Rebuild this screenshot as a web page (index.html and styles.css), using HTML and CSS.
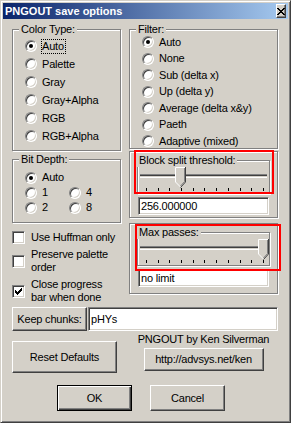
FILE: index.html
```html
<!DOCTYPE html>
<html>
<head>
    <meta charset="utf-8">
    <title>PNGOUT save options</title>
    <link rel="stylesheet" href="styles.css">
</head>
<body>
<div class="window">
    <div class="titlebar">
        <span class="title">PNGOUT save options</span>
        <span class="close-btn">
            <svg width="8" height="7" viewBox="0 0 8 7" shape-rendering="crispEdges"><path d="M0 0h2v1H0zM6 0h2v1H6zM1 1h2v1H1zM5 1h2v1H5zM2 2h4v1H2zM3 3h2v1H3zM2 4h4v1H2zM1 5h2v1H1zM5 5h2v1H5zM0 6h2v1H0zM6 6h2v1H6z" fill="#000"/></svg>
        </span>
    </div>
    <div class="client">
        <div class="columns">
            <div class="col-left">
                <div class="group color-group">
                    <span class="group-label">Color Type:</span>
                    <div class="radio-list">
                        <div class="radio"><span class="radio-box on"></span><span class="radio-text focus">Auto</span></div>
                        <div class="radio"><span class="radio-box"></span><span class="radio-text">Palette</span></div>
                        <div class="radio"><span class="radio-box"></span><span class="radio-text">Gray</span></div>
                        <div class="radio"><span class="radio-box"></span><span class="radio-text">Gray+Alpha</span></div>
                        <div class="radio"><span class="radio-box"></span><span class="radio-text">RGB</span></div>
                        <div class="radio"><span class="radio-box"></span><span class="radio-text">RGB+Alpha</span></div>
                    </div>
                </div>
                <div class="group depth-group">
                    <span class="group-label">Bit Depth:</span>
                    <div class="depth-grid">
                        <div class="radio wide"><span class="radio-box on"></span><span class="radio-text">Auto</span></div>
                        <div class="radio"><span class="radio-box"></span><span class="radio-text">1</span></div>
                        <div class="radio"><span class="radio-box"></span><span class="radio-text">4</span></div>
                        <div class="radio"><span class="radio-box"></span><span class="radio-text">2</span></div>
                        <div class="radio"><span class="radio-box"></span><span class="radio-text">8</span></div>
                    </div>
                </div>
                <div class="checks">
                    <div class="check"><span class="check-box"></span><span>Use Huffman only</span></div>
                    <div class="check"><span class="check-box"></span><span>Preserve palette<br>order</span></div>
                    <div class="check"><span class="check-box">
                        <svg width="7" height="7" viewBox="0 0 7 7" shape-rendering="crispEdges"><path d="M0 2h1v3H0zM1 3h1v3H1zM2 4h1v3H2zM3 3h1v3H3zM4 2h1v3H4zM5 1h1v3H5zM6 0h1v3H6z" fill="#000"/></svg>
                    </span><span>Close progress<br>bar when done</span></div>
                </div>
            </div>
            <div class="col-right">
                <div class="group filter-group">
                    <span class="group-label">Filter:</span>
                    <div class="radio-list">
                        <div class="radio"><span class="radio-box on"></span><span class="radio-text">Auto</span></div>
                        <div class="radio"><span class="radio-box"></span><span class="radio-text">None</span></div>
                        <div class="radio"><span class="radio-box"></span><span class="radio-text">Sub (delta x)</span></div>
                        <div class="radio"><span class="radio-box"></span><span class="radio-text">Up (delta y)</span></div>
                        <div class="radio"><span class="radio-box"></span><span class="radio-text">Average (delta x&amp;y)</span></div>
                        <div class="radio"><span class="radio-box"></span><span class="radio-text">Paeth</span></div>
                        <div class="radio"><span class="radio-box"></span><span class="radio-text">Adaptive (mixed)</span></div>
                    </div>
                </div>
                <div class="group slider-group block-group">
                    <div class="group inner-group">
                        <span class="group-label inner-label">Block split threshold:</span>
                        <div class="track"></div>
                        <div class="ticks"><i></i><i></i><i></i><i></i><i></i><i></i><i></i><i></i><i></i><i></i><i></i></div>
                        <svg class="thumb thumb-block" width="11" height="21" viewBox="0 0 11 21">
                            <polygon points="0,0 11,0 11,15 5.5,20.5 0,15" fill="#d4d0c8"/>
                            <path d="M0.5 15V0.5H10M0.5 15L5.5 20" stroke="#fff" fill="none"/>
                            <path d="M10.5 0V15L5.5 20.5" stroke="#404040" fill="none"/>
                            <path d="M9.5 1V14.6L5.5 19" stroke="#808080" fill="none"/>
                        </svg>
                    </div>
                    <div class="edit edit-value">256.000000</div>
                    <div class="marker marker-block"></div>
                </div>
                <div class="group slider-group max-group">
                    <div class="group inner-group">
                        <span class="group-label inner-label">Max passes:</span>
                        <div class="track"></div>
                        <div class="ticks"><i></i><i></i><i></i><i></i><i></i><i></i><i></i><i></i><i></i><i></i><i></i></div>
                        <svg class="thumb thumb-max" width="11" height="21" viewBox="0 0 11 21">
                            <polygon points="0,0 11,0 11,15 5.5,20.5 0,15" fill="#d4d0c8"/>
                            <path d="M0.5 15V0.5H10M0.5 15L5.5 20" stroke="#fff" fill="none"/>
                            <path d="M10.5 0V15L5.5 20.5" stroke="#404040" fill="none"/>
                            <path d="M9.5 1V14.6L5.5 19" stroke="#808080" fill="none"/>
                        </svg>
                    </div>
                    <div class="edit edit-value">no limit</div>
                    <div class="marker marker-max"></div>
                </div>
            </div>
        </div>
        <div class="chunks-row">
            <div class="btn btn-keep">Keep chunks:</div>
            <div class="edit edit-chunks">pHYs</div>
        </div>
        <div class="about-row">
            <div class="btn btn-reset">Reset Defaults</div>
            <div class="about">
                <span>PNGOUT by Ken Silverman</span>
                <div class="btn btn-link">http://advsys.net/ken</div>
            </div>
        </div>
        <div class="actions">
            <div class="btn btn-default">OK</div>
            <div class="btn">Cancel</div>
        </div>
    </div>
</div>
</body>
</html>
```

FILE: styles.css
```css
* {
    margin: 0;
    padding: 0;
    box-sizing: border-box;
}

body {
    background: #fff;
    font: 11px/13px "Liberation Sans", Arial, sans-serif;
    letter-spacing: -0.2px;
    color: #000;
}

.window {
    width: 291px;
    height: 423px;
    background: #d4d0c8;
    border: 1px solid;
    border-color: #d4d0c8 #404040 #404040 #d4d0c8;
    box-shadow: inset 1px 1px #fff, inset -1px -1px #808080;
    padding: 2px;
}

/* title bar */
.titlebar {
    height: 16px;
    display: flex;
    align-items: center;
    justify-content: space-between;
    padding: 0 2px;
    background: linear-gradient(to right, #0a246a, #a6caf0);
}

.title {
    color: #fff;
    font-weight: bold;
    letter-spacing: 0;
}

.close-btn {
    width: 10px;
    height: 14px;
    display: flex;
    align-items: center;
    justify-content: center;
    background: #d4d0c8;
    border: 1px solid;
    border-color: #fff #404040 #404040 #fff;
    box-shadow: inset -1px -1px #808080;
}

.close-btn svg {
    display: block;
}

/* layout */
.client {
    padding: 10px 10px 0 9px;
}

.columns {
    display: grid;
    grid-template-columns: 109px 149px;
    column-gap: 8px;
    align-items: start;
}

/* etched group box */
.group {
    position: relative;
    border: 1px solid #808080;
    box-shadow: inset 1px 1px #fff, 1px 1px #fff;
}

.group-label {
    position: absolute;
    top: -7px;
    left: 6px;
    padding: 0 2px;
    background: #d4d0c8;
    white-space: nowrap;
}

.color-group {
    height: 122px;
}

.color-group .radio-list {
    padding: 7px 0 0 12px;
}

.radio {
    display: flex;
    align-items: center;
    height: 18px;
    white-space: nowrap;
}

.radio-box {
    position: relative;
    flex: none;
    width: 12px;
    height: 12px;
    margin-right: 4px;
    border-radius: 50%;
    background: #fff;
    border: 1px solid;
    border-color: #808080 #fff #fff #808080;
    box-shadow: inset 1px 1px #404040, inset -1px -1px #d4d0c8;
}

.radio-box.on::after {
    content: "";
    position: absolute;
    left: 3px;
    top: 3px;
    width: 4px;
    height: 4px;
    border-radius: 50%;
    background: #000;
}

.radio-text {
    border: 1px dotted transparent;
    padding-right: 1px;
}

.radio-text.focus {
    border-color: #000;
}

.depth-group {
    margin-top: 8px;
    height: 64px;
}

.depth-grid {
    display: grid;
    grid-template-columns: 44px auto;
    padding: 10px 0 0 12px;
}

.depth-grid .radio {
    height: 15px;
}

.depth-grid .wide {
    grid-column: 1 / 3;
}

.checks {
    margin-top: 8px;
    display: flex;
    flex-direction: column;
    gap: 4px;
}

.check {
    display: flex;
    align-items: center;
}

.check-box {
    flex: none;
    width: 13px;
    height: 13px;
    margin-right: 6px;
    padding: 2px;
    background: #fff;
    border: 1px solid;
    border-color: #808080 #fff #fff #808080;
    box-shadow: inset 1px 1px #404040, inset -1px -1px #d4d0c8;
}

.check-box svg {
    display: block;
}

/* right column */
.filter-group {
    height: 120px;
}

.filter-group .radio-list {
    padding: 4px 0 0 12px;
}

.filter-group .radio {
    height: 16.5px;
}

.slider-group {
    margin-top: 2px;
    height: 67px;
}

.inner-group {
    margin: 8px 7px 0 7px;
    height: 34px;
}

.inner-label {
    left: -1px;
}

.track {
    margin: 13px 0 0 2px;
    width: 127px;
    height: 4px;
    border-top: 1px solid #808080;
    border-bottom: 1px solid #fff;
    box-shadow: inset 0 1px #404040;
    background: #d4d0c8;
}

.ticks {
    display: flex;
    justify-content: space-between;
    width: 118px;
    margin: 10px 0 0 8px;
}

.ticks i {
    width: 1px;
    height: 3px;
    background: #000;
}

.thumb {
    position: absolute;
    top: 6px;
}

.thumb-block {
    left: 37px;
}

.thumb-max {
    left: 120px;
}

.edit {
    background: #fff;
    border: 1px solid;
    border-color: #808080 #fff #fff #808080;
    box-shadow: inset 1px 1px #404040, inset -1px -1px #d4d0c8;
    padding: 0 2px;
    display: flex;
    align-items: center;
    white-space: nowrap;
}

.edit-value {
    margin: 3px 0 0 8px;
    width: 131px;
    height: 18px;
}

.max-group {
    margin-top: 5px;
    height: 71px;
}

/* red highlight frames */
.marker {
    position: absolute;
    border: 2px solid #f00;
}

.marker-block {
    left: 4px;
    top: -2px;
    width: 140px;
    height: 44px;
}

.marker-max {
    left: 5px;
    top: 0;
    width: 146px;
    height: 47px;
}

/* bottom rows */
.chunks-row {
    display: flex;
    margin-top: 3px;
    height: 24px;
}

.btn {
    display: flex;
    align-items: center;
    justify-content: center;
    background: #d4d0c8;
    border: 1px solid;
    border-color: #fff #404040 #404040 #fff;
    box-shadow: inset -1px -1px #808080;
    white-space: nowrap;
}

.btn-keep {
    width: 75px;
}

.edit-chunks {
    width: 190px;
    margin-left: 1px;
}

.about-row {
    display: grid;
    grid-template-columns: 109px 149px;
    column-gap: 8px;
    align-items: start;
    margin-top: 2px;
}

.btn-reset {
    margin-top: 8px;
    width: 105px;
    height: 32px;
}

.about {
    display: flex;
    flex-direction: column;
    align-items: center;
}

.btn-link {
    margin-top: 2px;
    width: 120px;
    height: 23px;
}

.actions {
    display: flex;
    gap: 18px;
    margin-top: 12px;
    padding-left: 45px;
}

.actions .btn {
    width: 75px;
    height: 26px;
}

.btn-default {
    border-color: #000;
    box-shadow: inset 1px 1px #fff, inset -1px -1px #404040, inset -2px -2px #808080;
}
```
